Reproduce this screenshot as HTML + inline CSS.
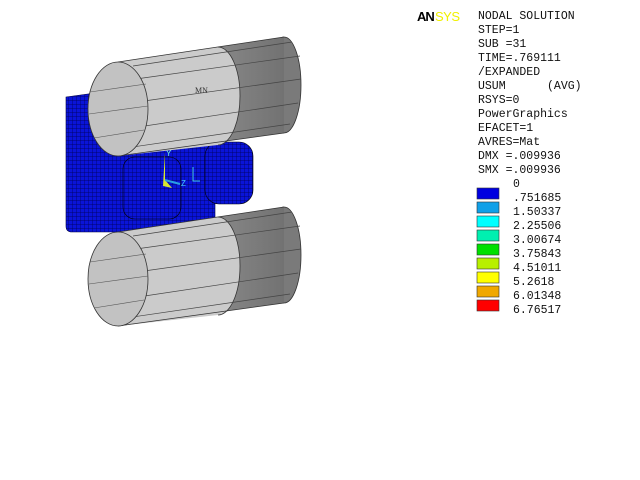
<!DOCTYPE html>
<html><head><style>
html,body{margin:0;padding:0;background:#fff;width:640px;height:480px;overflow:hidden}
.t{position:absolute;font-family:"Liberation Mono",monospace;font-size:11.5px;color:#111;white-space:pre;line-height:14px}
</style></head><body>
<svg width="640" height="480" style="position:absolute;left:0;top:0">
<defs>
<pattern id="m" width="4" height="4" patternUnits="userSpaceOnUse">
<rect width="4" height="4" fill="#0a14d8"/>
<path d="M0 0H4M0 0V4" stroke="#000050" stroke-width="0.7"/>
</pattern>
<linearGradient id="dk" x1="0" x2="1"><stop offset="0" stop-color="#a8a8a8"/><stop offset="1" stop-color="#727272"/></linearGradient>
<g id="cyl">
<ellipse cx="284" cy="85" rx="17" ry="48" fill="#7a7a7a" stroke="#333" stroke-width="0.8"/>
<path d="M118 62 L284 37 L284 133 L118 156 Z" fill="url(#dk)"/>
<path d="M118 62 L218 47 A22 49 0 0 1 218 145 L118 156 Z" fill="#cbcbcb"/>
<path d="M218 47 A22 49 0 0 1 218 145" fill="none" stroke="#333" stroke-width="0.8"/>
<path d="M118 62 L284 37 M118 156 L284 133" stroke="#333" stroke-width="0.8"/>
<path d="M100 84L300 56M94 108L301 79M98 133L298 103M112 150L290 124M133 66L292 42" stroke="#444" stroke-width="0.7"/>
<ellipse cx="118" cy="109" rx="30" ry="47" fill="#c2c2c2" stroke="#333" stroke-width="0.8"/>
<path d="M90 92L146 84M89 114L148 106M94 138L144 130" stroke="#555" stroke-width="0.6"/>
</g>
</defs>
<!-- blue block -->
<path d="M66 97 L110 91 L110 150 L215 128 L215 232 L72 232 Q66 232 66 226 Z" fill="url(#m)" stroke="#000040" stroke-width="0.6"/>
<rect x="205" y="142" width="48" height="62" rx="14" fill="url(#m)" stroke="#000" stroke-width="0.6"/>
<rect x="123" y="157" width="58" height="62" rx="12" fill="url(#m)" stroke="#000" stroke-width="0.6"/>
<!-- axis triad -->
<path d="M165 152 L165 180 L172 188 L163 186 Z" fill="#d8e830"/>
<path d="M165 180 L180 184" stroke="#29a0e0" stroke-width="2"/>
<text x="166" y="156" font-size="8" fill="#7fd" font-family="Liberation Sans">Y</text>
<text x="181" y="186" font-size="8" fill="#4cf" font-family="Liberation Sans">Z</text>
<path d="M193 167V181H200" stroke="#4cf" fill="none"/>
<use href="#cyl"/>
<text x="195" y="93" font-size="8" fill="#333" font-family="Liberation Serif">MN</text>
<use href="#cyl" transform="translate(0,170)"/>
<!-- legend boxes -->
<g stroke="#333" stroke-width="0.6">
<rect x="477" y="188" width="22" height="11" fill="#0000e0"/>
<rect x="477" y="202" width="22" height="11" fill="#10a0e8"/>
<rect x="477" y="216" width="22" height="11" fill="#00ffff"/>
<rect x="477" y="230" width="22" height="11" fill="#00f0b0"/>
<rect x="477" y="244" width="22" height="11" fill="#00e000"/>
<rect x="477" y="258" width="22" height="11" fill="#b8f000"/>
<rect x="477" y="272" width="22" height="11" fill="#ffff00"/>
<rect x="477" y="286" width="22" height="11" fill="#f0a800"/>
<rect x="477" y="300" width="22" height="11" fill="#ff0000"/>
</g>
<text x="417" y="21" font-family="Liberation Sans" font-size="13" font-weight="bold" fill="#000" letter-spacing="-1">AN</text>
<text x="435" y="21" font-family="Liberation Sans" font-size="13" fill="#f0f000" letter-spacing="-0.5">SYS</text>
</svg>
<div class="t" style="left:478px;top:10px">NODAL SOLUTION
STEP=1
SUB =31
TIME=.769111
/EXPANDED
USUM      (AVG)
RSYS=0
PowerGraphics
EFACET=1
AVRES=Mat
DMX =.009936
SMX =.009936</div>
<div class="t" style="left:513px;top:178px">0
.751685
1.50337
2.25506
3.00674
3.75843
4.51011
5.2618
6.01348
6.76517</div>
</body></html>
